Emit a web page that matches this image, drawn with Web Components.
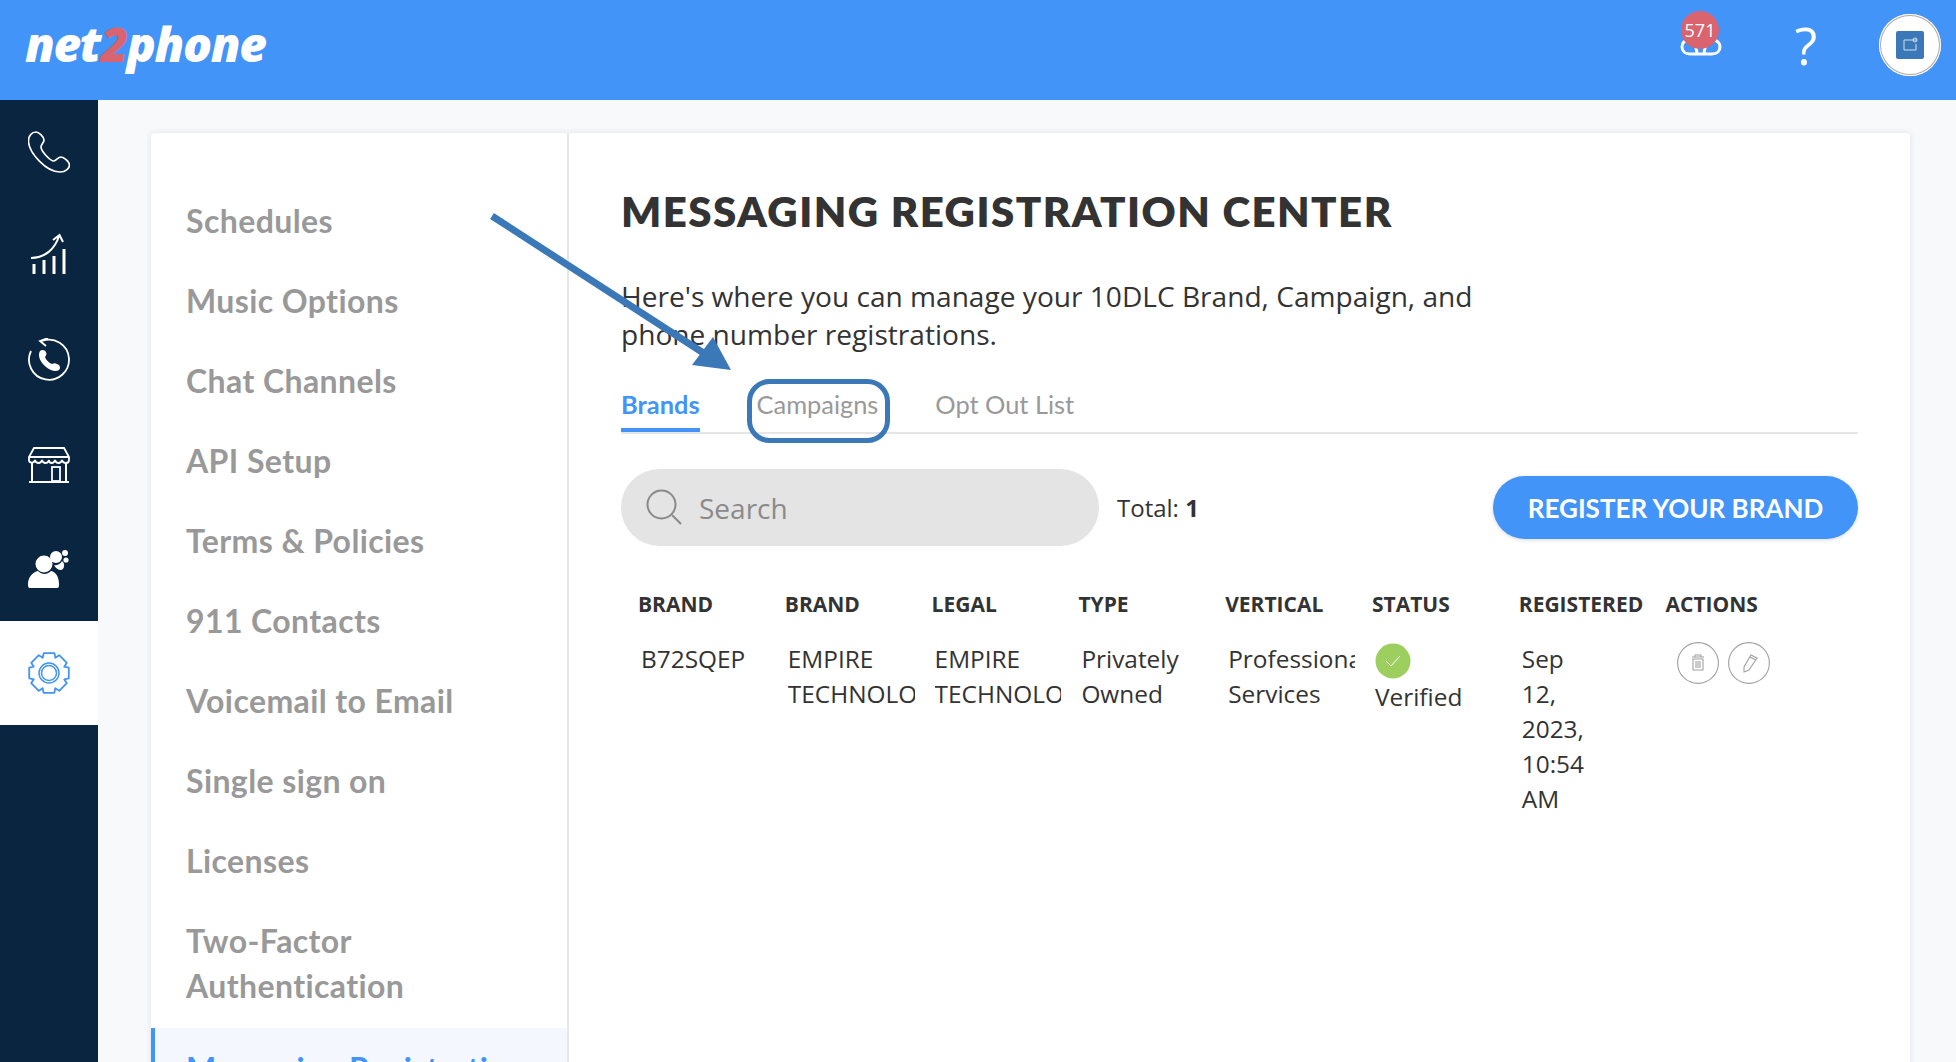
<!DOCTYPE html>
<html>
<head>
<meta charset="utf-8">
<title>Messaging Registration Center</title>
<style>
    html, body { margin: 0; height: 100%; overflow: hidden; background: #f8f9fb; font-family: "Open Sans", sans-serif; }
</style>
</head>
<body>
<app-shell>
    <app-topbar slot="top"></app-topbar>
    <app-sidebar slot="side"></app-sidebar>
    <settings-nav slot="nav"></settings-nav>
    <registration-center slot="main"></registration-center>
</app-shell>
<arrow-note></arrow-note>

<script>
class AppShell extends HTMLElement {
    constructor() {
        super();
        this.attachShadow({ mode: "open" });
    }
    connectedCallback() {
        this.shadowRoot.innerHTML = `
            <style>
                :host { display: flex; flex-direction: column; height: 1062px; overflow: hidden; }
                .body { display: flex; flex: 1; min-height: 0; }
                .stage { flex: 1; padding: 33px 46px 0 53px; min-width: 0; }
                .card {
                    display: flex;
                    height: 1100px;
                    background: white;
                    border-radius: 4px 4px 0 0;
                    box-shadow: 0 0 6px rgba(40, 60, 90, 0.12);
                }
            </style>
            <slot name="top"></slot>
            <div class="body">
                <slot name="side"></slot>
                <div class="stage">
                    <div class="card">
                        <slot name="nav"></slot>
                        <slot name="main"></slot>
                    </div>
                </div>
            </div>
        `;
    }
}
customElements.define("app-shell", AppShell);

class AppTopbar extends HTMLElement {
    constructor() {
        super();
        this.attachShadow({ mode: "open" });
    }
    connectedCallback() {
        this.shadowRoot.innerHTML = `
            <style>
                :host { display: flex; align-items: center; height: 100px; background: #4294f8; flex: none; }
                .logo {
                    margin: 0 0 12px 25px;
                    font: italic 800 48px/1 "Open Sans", sans-serif;
                    letter-spacing: -1.4px;
                    color: white;
                }
                .logo b { color: #d9636e; font-weight: 800; }
                .right { margin-left: auto; display: flex; align-items: center; padding-bottom: 10px; }
                .alerts { position: relative; width: 44px; height: 60px; margin-right: 52px; }
                .alerts svg { position: absolute; left: 0; top: 20px; }
                .badge {
                    position: absolute;
                    left: 1px;
                    top: -4px;
                    width: 38px;
                    height: 38px;
                    border-radius: 50%;
                    background: #d9636e;
                    color: white;
                    font: 18px/38px "Open Sans", sans-serif;
                    text-align: center;
                }
                .help { width: 60px; text-align: center; margin-right: 43px; color: white; font: 400 52px/1 "Open Sans", sans-serif; }
                .avatar {
                    width: 62px;
                    height: 62px;
                    margin-right: 15px;
                    box-sizing: border-box;
                    border-radius: 50%;
                    background: white;
                    box-shadow: inset 0 0 0 1px white, inset 0 0 0 2px #aaa;
                    display: flex;
                    align-items: center;
                    justify-content: center;
                }
            </style>
            <div class="logo">net<b>2</b>phone</div>
            <div class="right">
                <div class="alerts">
                    <svg width="42" height="22" viewBox="0 0 42 22" fill="none" stroke="white" stroke-width="3">
                        <path d="M10 5 C3 5 2 9 2 12 C2 16 5 19 10 19 H32 C37 19 40 16 40 12 C40 9 38 5 32 5"/>
                        <path d="M15 8 L17 18 M26 8 L24 18"/>
                    </svg>
                    <div class="badge">571</div>
                </div>
                <div class="help">?</div>
                <div class="avatar">
                    <svg width="28" height="28" viewBox="0 0 28 28">
                        <rect width="28" height="28" rx="2" fill="#3b78b8"/>
                        <path d="M21 9 H8 V19 H20 V13" fill="none" stroke="#cfe0f2" stroke-width="1"/>
                        <circle cx="19" cy="9" r="2" fill="none" stroke="#cfe0f2" stroke-width="1"/>
                    </svg>
                </div>
            </div>
        `;
    }
}
customElements.define("app-topbar", AppTopbar);

class SideItem extends HTMLElement {
    constructor() {
        super();
        this.attachShadow({ mode: "open" });
    }
    connectedCallback() {
        this.shadowRoot.innerHTML = `
            <style>
                :host { display: flex; align-items: center; justify-content: center; height: 104.2px; color: white; }
                :host([active]) { background: white; color: #4294f8; }
            </style>
            <slot></slot>
        `;
    }
}
customElements.define("side-item", SideItem);

class AppSidebar extends HTMLElement {
    constructor() {
        super();
        this.attachShadow({ mode: "open" });
    }
    gearPath() {
        // 8 teeth, rounded enough at this size
        let d = "";
        for (let i = 0; i < 8; i++) {
            const a = i * Math.PI / 4 - Math.PI / 8;
            const pts = [[16.5, a], [20.5, a + 0.13], [20.5, a + 0.66], [16.5, a + 0.79]];
            pts.forEach(([r, t], j) => {
                const x = (21 + r * Math.cos(t)).toFixed(1);
                const y = (21 + r * Math.sin(t)).toFixed(1);
                d += (i === 0 && j === 0 ? "M" : "L") + x + " " + y + " ";
            });
        }
        return d + "Z";
    }
    connectedCallback() {
        this.shadowRoot.innerHTML = `
            <style>
                :host { display: block; width: 98px; flex: none; background: #0a2540; }
                svg { display: block; }
            </style>
            <side-item>
                <svg width="42" height="42" viewBox="0 0 42 42" fill="none" stroke="currentColor" stroke-width="1.7">
                    <path d="M8 1 C4 1 0 5 0.5 11 C1.5 22 18 41 32 41 C38 41 41.5 37 41.5 34 C41.5 31 36 26 33 26 C30 26 29 29 26 30 C22 30 13 20 13 16 C13 13 16 12 16 9 C16 6 11 1 8 1 Z"/>
                </svg>
            </side-item>
            <side-item>
                <svg width="36" height="42" viewBox="0 0 36 42" fill="none" stroke="currentColor" style="margin-bottom: 4px">
                    <path d="M3 41 V31 M13 41 V27 M23 41 V23 M33 41 V16" stroke-width="3"/>
                    <path d="M0 25 C14 25 24 16 28 3 M22 7 L28.5 2 L32 9" stroke-width="2"/>
                </svg>
            </side-item>
            <side-item>
                <svg width="44" height="44" viewBox="0 0 44 44" fill="none" stroke="currentColor" stroke-width="1.8">
                    <path d="M4 13 A20 20 0 1 0 15 3"/>
                    <path d="M21 0 L13 3 L19 8" stroke-width="1.8"/>
                    <path fill="currentColor" stroke="none" d="M13 13 C15 11 18 12 19 14 C20 16 19 18 18 19 C19 22 22 25 25 26 C27 25 28.5 25 30 26 C33 27 34 30 32 32 C29 34 24 33 19 29 C14 25 10 18 13 13 Z"/>
                </svg>
            </side-item>
            <side-item>
                <svg width="42" height="36" viewBox="0 0 42 36" fill="none" stroke="currentColor" stroke-width="1.8">
                    <path d="M6 1 H36 L41 10 V13 C41 17 35 17 34 13 C33 17 28 17 27 13 C26 17 21 17 21 13 C20 17 15 17 14 13 C13 17 8 17 7 13 C6 17 1 16 1 13 V10 Z" />
                    <path d="M1 10 H41"/>
                    <path d="M4 16 V34 M38 16 V34 M1 35 H41" stroke-width="2"/>
                    <rect x="24" y="20" width="8" height="14"/>
                </svg>
            </side-item>
            <side-item>
                <svg width="42" height="40" viewBox="0 0 42 40" fill="currentColor">
                    <circle cx="16" cy="15" r="8.5"/>
                    <path d="M2 39 C0 39 0 37 0 35 C0 28 5 23 10 22 C14 26 19 26 23 22 C28 23 31 28 31 35 C31 37 31 39 29 39 Z"/>
                    <circle cx="28" cy="8" r="6"/>
                    <path d="M26 16 C30 17 33 14 34 12 C37 14 37 20 33 21 C31 21 28 20 26 16 Z"/>
                    <circle cx="37" cy="4" r="3"/>
                    <circle cx="38" cy="11" r="2.6"/>
                </svg>
            </side-item>
            <side-item active>
                <svg width="42" height="42" viewBox="0 0 42 42" fill="none" stroke="currentColor">
                    <path d="${this.gearPath()}" stroke-width="1.8" stroke-linejoin="round"/>
                    <circle cx="21" cy="21" r="10" stroke-width="1.5"/>
                    <circle cx="21" cy="21" r="7.5" stroke-width="1.5"/>
                </svg>
            </side-item>
        `;
    }
}
customElements.define("app-sidebar", AppSidebar);

class NavLink extends HTMLElement {
    constructor() {
        super();
        this.attachShadow({ mode: "open" });
    }
    connectedCallback() {
        this.shadowRoot.innerHTML = `
            <style>
                :host {
                    display: block;
                    padding: 17.5px 24px 17.5px 35px;
                    font: 700 32px/45px Lato, sans-serif;
                    letter-spacing: 0.4px;
                    color: #999;
                }
                :host([active]) {
                    margin-top: 3px;
                    background: #f4f7fd;
                    border-left: 4px solid #4294f8;
                    padding-left: 31px;
                    color: #4294f8;
                    white-space: nowrap;
                }
            </style>
            <slot></slot>
        `;
    }
}
customElements.define("nav-link", NavLink);

class SettingsNav extends HTMLElement {
    constructor() {
        super();
        this.attachShadow({ mode: "open" });
    }
    connectedCallback() {
        const items = ["Schedules", "Music Options", "Chat Channels", "API Setup", "Terms &amp; Policies",
            "911 Contacts", "Voicemail to Email", "Single sign on", "Licenses", "Two-Factor Authentication"];
        this.shadowRoot.innerHTML = `
            <style>
                :host { display: block; width: 418px; flex: none; box-sizing: border-box; padding-top: 47px; border-right: 2px solid #e6e6e6; overflow: hidden; }
            </style>
            ${items.map(t => `<nav-link>${t}</nav-link>`).join("")}
            <nav-link active>Messaging Registration</nav-link>
        `;
    }
}
customElements.define("settings-nav", SettingsNav);

class TabBar extends HTMLElement {
    constructor() {
        super();
        this.attachShadow({ mode: "open" });
    }
    connectedCallback() {
        this.shadowRoot.innerHTML = `
            <style>
                :host { display: flex; gap: 57px; border-bottom: 2px solid #e6e6e6; height: 55px; box-sizing: border-box; font: 400 25.4px/1 Lato, sans-serif; color: #999; }
                div { padding-top: 13px; height: 53px; box-sizing: border-box; }
                .on { color: #4294f8; font-weight: 700; border-bottom: 4px solid #4294f8; }
            </style>
            <div class="on">Brands</div>
            <div>Campaigns</div>
            <div>Opt Out List</div>
        `;
    }
}
customElements.define("tab-bar", TabBar);

class SearchRow extends HTMLElement {
    constructor() {
        super();
        this.attachShadow({ mode: "open" });
    }
    connectedCallback() {
        this.shadowRoot.innerHTML = `
            <style>
                :host { display: flex; align-items: center; margin-top: 35px; }
                .search {
                    width: 478px;
                    height: 77px;
                    box-sizing: border-box;
                    padding-left: 25px;
                    display: flex;
                    align-items: center;
                    gap: 16px;
                    border-radius: 39px;
                    background: #e4e4e4;
                    color: #8a8a8a;
                    font-size: 28px;
                }
                .total { margin-left: 18px; font-size: 24px; color: #333; }
                button {
                    margin-left: auto;
                    width: 365px;
                    height: 63px;
                    border: none;
                    border-radius: 32px;
                    background: #4294f8;
                    color: white;
                    font: 700 26px Lato, sans-serif;
                    box-shadow: 0 1px 4px rgba(0, 0, 0, 0.15);
                }
            </style>
            <div class="search">
                <svg width="37" height="37" viewBox="0 0 37 37" fill="none" stroke="#8a8a8a" stroke-width="2">
                    <circle cx="15.5" cy="15.5" r="14"/>
                    <path d="M26 26 L35 35"/>
                </svg>
                <span>Search</span>
            </div>
            <div class="total">Total: <b>1</b></div>
            <button>REGISTER YOUR BRAND</button>
        `;
    }
}
customElements.define("search-row", SearchRow);

class BrandTable extends HTMLElement {
    constructor() {
        super();
        this.attachShadow({ mode: "open" });
    }
    connectedCallback() {
        const heads = ["BRAND", "BRAND", "LEGAL", "TYPE", "VERTICAL", "STATUS", "REGISTERED", "ACTIONS"];
        this.shadowRoot.innerHTML = `
            <style>
                :host {
                    display: grid;
                    grid-template-columns: repeat(7, 146.8px) 1fr;
                    margin-top: 42px;
                    color: #333;
                    font-size: 24.4px;
                    line-height: 35px;
                }
                .h { padding-left: 17px; font: 700 21px/32px "Open Sans", sans-serif; white-space: nowrap; color: #333; }
                .c { padding: 21px 0 0 20px; }
                .clip { overflow: hidden; }
                .status { padding-top: 23px; }
                .when { width: 72px; }
                .ok { display: block; width: 36px; height: 36px; }
                .acts { display: flex; gap: 9px; padding: 21.5px 0 0 28px; }
                .acts svg { display: block; }
            </style>
            ${heads.map(h => `<div class="h">${h}</div>`).join("")}
            <div class="c"><div class="clip">B72SQEP</div></div>
            <div class="c"><div class="clip">EMPIRE TECHNOLOGIES</div></div>
            <div class="c"><div class="clip">EMPIRE TECHNOLOGIES</div></div>
            <div class="c"><div class="clip">Privately Owned</div></div>
            <div class="c"><div class="clip">Professional Services</div></div>
            <div class="c status">
                <svg class="ok" viewBox="0 0 36 36">
                    <circle cx="18" cy="18" r="17.5" fill="#9ccf5e"/>
                    <path d="M11 18 L16 23 L25 13" fill="none" stroke="white" stroke-width="1"/>
                </svg>
                Verified
            </div>
            <div class="c"><div class="when">Sep 12, 2023, 10:54 AM</div></div>
            <div class="acts">
                <svg width="42" height="42" viewBox="0 0 42 42" fill="none" stroke="#a0a0a0" stroke-width="1.1">
                    <circle cx="21" cy="21" r="20.4"/>
                    <path d="M15 15 H27 M18 15 V13 H24 V15 M16 17 H26 V28 H16 Z M19 19 V26 M21 19 V26 M23 19 V26"/>
                </svg>
                <svg width="42" height="42" viewBox="0 0 42 42" fill="none" stroke="#a0a0a0" stroke-width="1.1">
                    <circle cx="21" cy="21" r="20.4"/>
                    <path d="M23 13 L29 16 L21 28 L16 30 L16 25 Z M22 15 L28 18"/>
                </svg>
            </div>
        `;
    }
}
customElements.define("brand-table", BrandTable);

class RegistrationCenter extends HTMLElement {
    constructor() {
        super();
        this.attachShadow({ mode: "open" });
    }
    connectedCallback() {
        this.shadowRoot.innerHTML = `
            <style>
                :host { display: block; flex: 1; min-width: 0; padding: 51px 52px 0 52px; color: #333; }
                h1 { margin: 0; font: 800 42px/54px Lato, sans-serif; letter-spacing: 1.45px; color: #333; }
                p { margin: 39px 0 0; width: 880px; font-size: 28.1px; line-height: 38px; }
                tab-bar { margin-top: 26px; }
            </style>
            <h1>MESSAGING REGISTRATION CENTER</h1>
            <p>Here's where you can manage your 10DLC Brand, Campaign, and phone number registrations.</p>
            <tab-bar></tab-bar>
            <search-row></search-row>
            <brand-table></brand-table>
        `;
    }
}
customElements.define("registration-center", RegistrationCenter);

// the blue arrow and ring drawn on top of the screenshot
class ArrowNote extends HTMLElement {
    constructor() {
        super();
        this.attachShadow({ mode: "open" });
    }
    connectedCallback() {
        this.shadowRoot.innerHTML = `
            <style>
                :host { position: absolute; left: 0; top: 0; width: 1956px; height: 1062px; pointer-events: none; }
                svg { display: block; }
            </style>
            <svg width="1956" height="1062" fill="none">
                <path d="M492 216 L705 354" stroke="#3b78b8" stroke-width="7"/>
                <path d="M731 370 L713 337 L692 365 Z" fill="#3b78b8"/>
                <rect x="749.5" y="381.5" width="138" height="59" rx="20" stroke="#3b78b8" stroke-width="5"/>
            </svg>
        `;
    }
}
customElements.define("arrow-note", ArrowNote);
</script>
</body>
</html>
